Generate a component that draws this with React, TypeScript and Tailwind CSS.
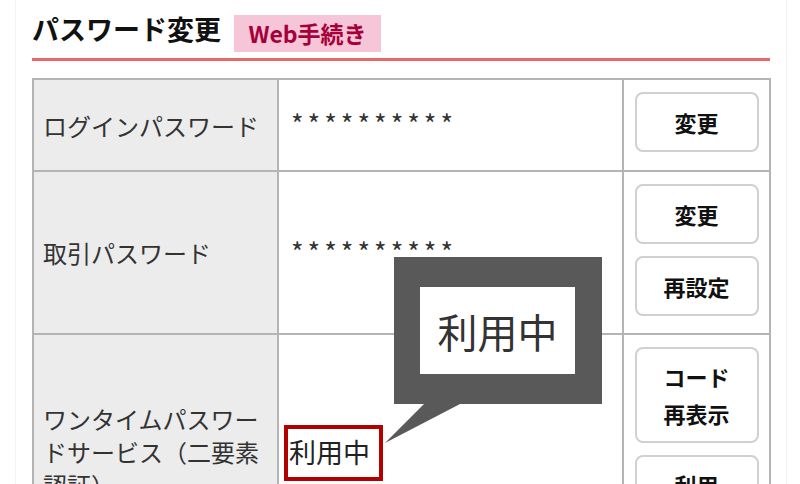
function ActionButton({ children, tall = false }: { children: React.ReactNode; tall?: boolean }) {
  return (
    <button
      className={`mx-auto flex w-[124px] flex-col items-center justify-center rounded-[8px] border-2 border-[#d0d0d0] bg-white text-[22px] font-bold text-[#111] ${
        tall ? "h-[96px] leading-[37px]" : "h-[60px] leading-[30px]"
      }`}
    >
      {children}
    </button>
  )
}

function Masked() {
  return <div className="mb-[2px] h-[26px] text-[27px] leading-[26px] tracking-[4px] text-[#333]">**********</div>
}

export default function App() {
  return (
    <div className="h-[484px] w-[800px] overflow-hidden bg-white font-['Noto_Sans_CJK_JP',sans-serif] text-[#333]">
      <div className="relative ml-[15px] h-[484px] w-[772px] overflow-hidden border-x border-[#f3f3f3] px-[16px] pt-[15px]">
        {/* Heading */}
        <div className="flex items-start gap-[13px]">
          <h1 className="text-[27px] font-bold leading-[27px] text-[#111]">パスワード変更</h1>
          <span className="flex h-[37px] w-[147px] items-center justify-center bg-[#f6c5d7] pb-[1px] text-[23px] font-bold text-[#a6003a]">
            Web手続き
          </span>
        </div>
        <div className="mt-[6px] h-[3px] bg-[#e8676b]" />

        {/* Password table */}
        <table className="mt-[17px] w-[737px] table-fixed border-collapse border-2 border-[#b4b4b4]">
          <colgroup>
            <col className="w-[245px]" />
            <col className="w-[345px]" />
            <col className="w-[147px]" />
          </colgroup>
          <tbody>
            <tr>
              <td className="border-2 border-[#b4b4b4] bg-[#ececec] pl-[9px] align-middle text-[24px] leading-[33px]">
                ログインパスワード
              </td>
              <td className="border-2 border-[#b4b4b4] pl-[12px] align-middle">
                <Masked />
              </td>
              <td className="border-2 border-[#b4b4b4] px-[8px] pb-[18px] pt-[12px]">
                <ActionButton>変更</ActionButton>
              </td>
            </tr>
            <tr>
              <td className="border-2 border-[#b4b4b4] bg-[#ececec] pl-[9px] align-middle text-[24px] leading-[33px]">
                取引パスワード
              </td>
              <td className="border-2 border-[#b4b4b4] pl-[12px] align-middle">
                <Masked />
              </td>
              <td className="border-2 border-[#b4b4b4] px-[8px] pb-[17px] pt-[12px]">
                <div className="flex flex-col gap-[12px]">
                  <ActionButton>変更</ActionButton>
                  <ActionButton>再設定</ActionButton>
                </div>
              </td>
            </tr>
            <tr>
              <td className="border-2 border-[#b4b4b4] bg-[#ececec] pl-[9px] align-middle text-[24px] leading-[33px]">
                ワンタイムパスワー
                <br />
                ドサービス（二要素
                <br />
                認証）
              </td>
              <td className="border-2 border-[#b4b4b4] pl-[10px] align-middle">
                <span className="relative inline-block text-[27px] leading-[33px] text-[#222]">
                  利用中
                  <span className="absolute -bottom-[13px] -left-[5px] -right-[13px] -top-[10px] border-4 border-[#b30000]" />
                </span>
              </td>
              <td className="border-2 border-[#b4b4b4] px-[8px] pb-[17px] pt-[12px]">
                <div className="flex flex-col gap-[12px]">
                  <ActionButton tall>
                    <span>コード</span>
                    <span>再表示</span>
                  </ActionButton>
                  <ActionButton tall>
                    <span>利用</span>
                    <span>停止</span>
                  </ActionButton>
                </div>
              </td>
            </tr>
          </tbody>
        </table>

        {/* Callout annotation */}
        <div className="absolute left-[378px] top-[257px] flex h-[147px] w-[208px] items-center justify-center border-b-[30px] border-l-[26px] border-r-[27px] border-t-[30px] border-[#595959] bg-white">
          <span className="text-[40px] leading-[40px] text-[#333]">利用中</span>
        </div>
        <svg className="absolute left-[369px] top-[403px]" width="78" height="41" viewBox="0 0 78 41">
          <polygon points="40,0 77,0 0,40" fill="#595959" />
        </svg>
      </div>
    </div>
  )
}
